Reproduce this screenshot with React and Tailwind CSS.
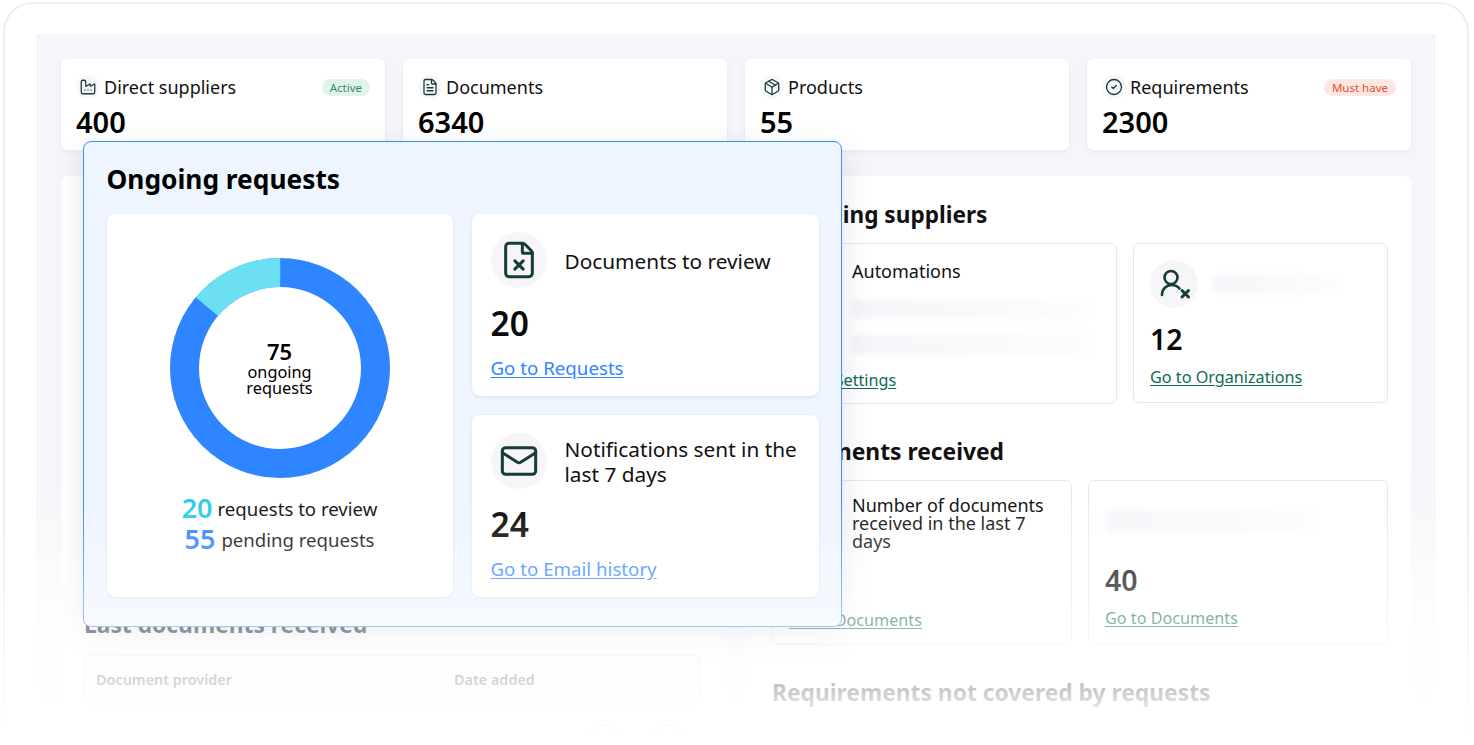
import { Factory, FileText, Package, CircleCheck, FileX, Mail } from "lucide-react";

const stats = [
  { label: "Direct suppliers", value: "400", icon: Factory, badge: "Active", badgeClass: "bg-[#e2f4e7] text-[#2b8a74]" },
  { label: "Documents", value: "6340", icon: FileText },
  { label: "Products", value: "55", icon: Package },
  { label: "Requirements", value: "2300", icon: CircleCheck, badge: "Must have", badgeClass: "bg-[#fde7e2] text-[#e4502a]" },
];

function StatCard({ label, value, icon: Icon, badge, badgeClass }) {
  return (
    <div className="h-[91px] rounded-md bg-white px-[15px] pt-[15px] shadow-[0_2px_6px_rgba(30,30,70,0.05)]">
      <div className="flex h-[26px] items-center">
        <div className="flex h-[24px] w-[24px] items-center justify-center rounded-full bg-[#f8f7fa]">
          <Icon size={18} strokeWidth={1.7} className="text-[#143d35]" />
        </div>
        <span className="ml-[4px] text-[18px] text-[#111]">{label}</span>
        {badge && (
          <span className={`ml-auto rounded-full px-[8px] text-[11.5px] leading-[17px] ${badgeClass}`}>{badge}</span>
        )}
      </div>
      <div className="mt-[3px] text-[29px] font-semibold leading-[38px] text-black">{value}</div>
    </div>
  );
}

function Skeleton({ className }) {
  return <div className={`rounded bg-gradient-to-r from-[#f6f5f9] to-[#fdfdfe] blur-[2px] ${className}`}></div>;
}

function UserXIcon() {
  return (
    <svg width="36" height="36" viewBox="0 0 36 36" fill="none" stroke="#143d35" strokeWidth="2.600" strokeLinecap="round">
      <circle cx="15" cy="11.500" r="6.500" />
      <path d="M6 29c0-5.500 4-10 9.500-10 3 0 6 1 8 3.500" />
      <path d="M26 24.500l6.500 6.500M32.500 24.500l-6.500 6.500" strokeWidth="3" />
    </svg>
  );
}

function Donut() {
  return (
    <div className="relative h-[220px] w-[220px]">
      <svg width="220" height="220" viewBox="0 0 220 220">
        <circle cx="110" cy="110" r="95.500" fill="none" stroke="#2f84ff" strokeWidth="29" />
        <circle
          cx="110"
          cy="110"
          r="95.500"
          fill="none"
          stroke="#6be0f2"
          strokeWidth="29"
          strokeDasharray="83.400 600"
          transform="rotate(-140 110 110)"
        />
      </svg>
      <div className="absolute inset-0 flex flex-col items-center justify-center pb-[2px] text-center text-black">
        <span className="text-[22px] font-semibold leading-[26px]">75</span>
        <span className="text-[16.300px] leading-[16px]">ongoing</span>
        <span className="text-[16.300px] leading-[16px]">requests</span>
      </div>
    </div>
  );
}

function RequestCard({ icon: Icon, iconSize, title, value, link }) {
  return (
    <div className="h-[182px] rounded-lg bg-white px-[19px] pt-[18px] shadow-[0_1px_3px_rgba(40,60,120,0.12)]">
      <div className="flex h-[56px] items-center">
        <div className="flex h-[56px] w-[56px] shrink-0 items-center justify-center rounded-full bg-[#f7f5f8]">
          <Icon size={iconSize} strokeWidth={1.8} className="text-[#143d35]" />
        </div>
        <span className="ml-[18px] pt-[2px] text-[20.800px] leading-[25px] text-[#111]">{title}</span>
      </div>
      <div className="mt-[12px] text-[33.500px] font-semibold leading-[46px] text-[#0a0a0a]">{value}</div>
      <a className="mt-[10px] block text-[18.700px] leading-[24px] text-[#2f84ff] underline underline-offset-2">{link}</a>
    </div>
  );
}

export default function App() {
  return (
    <div className="relative h-[745px] w-[1474px] overflow-hidden bg-white font-['Noto_Sans',sans-serif]">
      {/* window frame */}
      <div className="ml-[3px] mr-[5px] mt-[2px] h-[734px] rounded-t-[30px] border-2 border-[#eeeeee] bg-white pl-[31px] pr-[31px] pt-[30px]">
        <div className="h-[700px] overflow-hidden bg-[linear-gradient(to_bottom,#f5f5fa_0%,#f5f5fa_62%,#fbfbfd_80%,#ffffff_100%)] px-[25px] pt-[25px]">
          <div className="grid grid-cols-4 gap-[18px]">
            {stats.map((s) => (
              <StatCard key={s.label} {...s} />
            ))}
          </div>

          <div className="mt-[26px] grid grid-cols-[664px_663px] gap-[23px]">
            {/* left card, mostly behind the popup */}
            <div className="h-[600px] rounded-md bg-white pl-[23px] pr-[25px] pt-[432px]">
              <h2 className="text-[22.800px] font-bold leading-[34px] text-[#111]">Last documents received</h2>
              <div className="mt-[12px] h-[52px] rounded-md border border-[#e6e6ea] bg-[#fafafa] px-[11px] pt-[14px]">
                <div className="flex text-[14.400px] font-semibold text-[#4c6660]">
                  <span className="w-[358px]">Document provider</span>
                  <span>Date added</span>
                </div>
              </div>
              <div className="mt-[19px] flex justify-end gap-[26px] pr-[14px]">
                <div className="h-[38px] w-[38px] rounded-full border border-black"></div>
                <div className="h-[38px] w-[38px] rounded-full border border-black"></div>
              </div>
            </div>

            <div className="h-[600px] rounded-md bg-white px-[24px] pt-[23px]">
              <h2 className="text-[22.600px] font-bold leading-[32px] text-[#111]">Outgoing suppliers</h2>
              <div className="mt-[12px] grid grid-cols-[345px_255px] gap-[16px]">
                <div className="h-[161px] rounded-md border border-[#e8e8ee] px-[16px] pt-[14px]">
                  <div className="flex">
                    <div className="w-[63px] shrink-0"></div>
                    <div className="flex-1">
                      <div className="text-[18px] leading-[26px] text-[#111]">Automations</div>
                      <Skeleton className="mt-[15px] h-[20px] w-[240px]" />
                      <Skeleton className="mt-[16px] h-[20px] w-[240px]" />
                    </div>
                  </div>
                  <a className="mt-[14px] block text-[16.200px] leading-[22px] text-[#0e6b55] underline underline-offset-2">Go to Settings</a>
                </div>
                <div className="h-[160px] rounded-md border border-[#e8e8ee] px-[16px] pt-[16px]">
                  <div className="flex items-center">
                    <div className="flex h-[48px] w-[48px] items-center justify-center rounded-full bg-[#f6f5f8]">
                      <UserXIcon />
                    </div>
                    <Skeleton className="ml-[15px] h-[20px] w-[128px]" />
                  </div>
                  <div className="mt-[12px] text-[28.500px] font-semibold leading-[38px] text-[#0a0a0a]">12</div>
                  <a className="mt-[8px] block text-[16.200px] leading-[22px] text-[#0e6b55] underline underline-offset-2">Go to Organizations</a>
                </div>
              </div>

              <h2 className="mt-[32px] text-[22.800px] font-bold leading-[32px] text-[#111]">Documents received</h2>
              <div className="mt-[12px] grid grid-cols-[300px_300px] gap-[16px]">
                <div className="h-[165px] rounded-md border border-[#e8e8ee] px-[16px] pt-[15px]">
                  <div className="flex">
                    <div className="w-[63px] shrink-0"></div>
                    <div className="text-[18px] leading-[18px] text-[#111]">Number of documents received in the last 7 days</div>
                  </div>
                  <a className="mt-[59px] block text-[16.200px] leading-[22px] text-[#0e6b55] underline underline-offset-2">Go to Documents</a>
                </div>
                <div className="h-[165px] rounded-md border border-[#e8e8ee] px-[16px] pt-[29px]">
                  <Skeleton className="h-[22px] w-[210px]" />
                  <div className="mt-[29px] text-[28.500px] font-semibold leading-[38px] text-[#0a0a0a]">40</div>
                  <a className="mt-[8px] block text-[16.200px] leading-[22px] text-[#0e6b55] underline underline-offset-2">Go to Documents</a>
                </div>
              </div>

              <h2 className="mt-[32px] text-[22.800px] font-bold leading-[32px] text-[#111]">Requirements not covered by requests</h2>
            </div>
          </div>
        </div>
      </div>

      {/* popup on top of the dashboard */}
      <div className="absolute left-[83px] top-[141px] h-[486px] w-[759px] rounded-lg border-[1.5px] border-[#3f8cff] bg-[#eef5ff] pl-[22.500px] pr-[21px] pt-[19px] shadow-[0_10px_30px_rgba(40,60,110,0.14)]">
        <h1 className="text-[26.300px] font-bold leading-[36px] text-black">Ongoing requests</h1>
        <div className="mt-[17px] grid grid-cols-[346px_347px] gap-[19px]">
          <div className="flex h-[383px] flex-col items-center rounded-lg bg-white pt-[44px] shadow-[0_1px_3px_rgba(40,60,120,0.12)]">
            <Donut />
            <div className="mt-[15px] flex h-[31px] items-center text-[18.600px] text-[#111]">
              <span className="mr-[5px] text-[27px] font-semibold text-[#2fcbe6]">20</span>
              requests to review
            </div>
            <div className="flex h-[31px] items-center text-[18.600px] text-[#111]">
              <span className="mr-[6px] text-[27px] font-semibold text-[#2f84ff]">55</span>
              pending requests
            </div>
          </div>
          <div className="flex flex-col gap-[19px]">
            <RequestCard icon={FileX} iconSize={40} title="Documents to review" value="20" link="Go to Requests" />
            <RequestCard icon={Mail} iconSize={40} title="Notifications sent in the last 7 days" value="24" link="Go to Email history" />
          </div>
        </div>
      </div>

      {/* white fade over the bottom of the page */}
      <div className="pointer-events-none absolute inset-x-0 bottom-0 h-[245px] bg-[linear-gradient(to_bottom,rgba(255,255,255,0)_0%,rgba(255,255,255,0.78)_78%,rgba(255,255,255,0.97)_90%,rgba(255,255,255,0.99)_100%)]"></div>
    </div>
  );
}
